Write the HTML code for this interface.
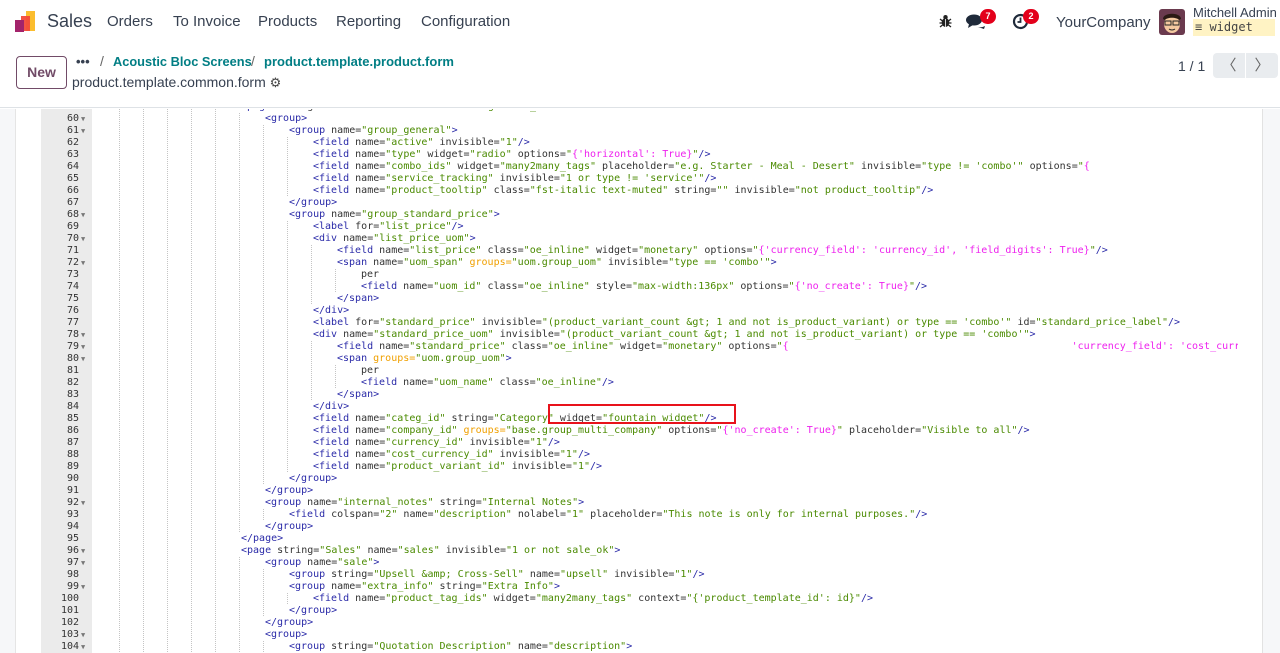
<!DOCTYPE html>
<html><head><meta charset="utf-8"><style>
*{box-sizing:border-box;margin:0;padding:0}
body{width:1280px;height:653px;overflow:hidden;background:#fff;font-family:"Liberation Sans",sans-serif;color:#212529;position:relative}
.nav{position:absolute;left:0;top:0;width:1280px;height:44px;background:#fff}
.nav .m{position:absolute;top:13px;font-size:15px;color:#374151}
.cp{position:absolute;left:0;top:44px;width:1280px;height:64px;border-bottom:1px solid #dee2e6;background:#fff}
.badge{position:absolute;background:#e3001b;color:#fff;font-size:9px;font-weight:bold;border-radius:8px;width:16px;height:15px;text-align:center;line-height:15px}
.ed{position:absolute;left:0;top:109px;width:1280px;height:544px;overflow:hidden}
.lp{position:absolute;left:0;top:0;width:16px;height:544px;background:#f6f7f9;border-right:1px solid #e5e5e5}
.gut{position:absolute;left:41px;top:0;width:51px;height:544px;background:#ebebeb}
.sb{position:absolute;left:1262px;top:0;width:18px;height:544px;background:#f6f7f9;border-left:1px solid #e2e2e2}
.code{position:absolute;left:0;top:-8px;width:1238px;overflow:hidden;font-family:"DejaVu Sans Mono",monospace;font-size:10px;line-height:12px}
.ln{height:12px;position:relative}
.ln .n{position:absolute;left:41px;width:38px;text-align:right;color:#333;top:0}
.ln .f{position:absolute;left:81px;color:#777;font-size:7px;top:0}
.ln .c{position:absolute;left:97px;top:0;height:12px;white-space:pre;line-height:12px}
i,b{display:inline-block;width:24px;height:12px;vertical-align:top}
i{background:repeating-linear-gradient(to bottom,#c4c4c4 0 1px,transparent 1px 2px) no-repeat 22px 0/1px 100%}
.t{color:#2a2aa8}.a{color:#333}.s{color:#4a8a00}.m2{color:#ee22ee}.o{color:#f0a000}
</style></head><body>
<div class="nav">
<svg style="position:absolute;left:15px;top:11px" width="23" height="22" viewBox="0 0 23 22"><rect x="11" y="0" width="9" height="20" fill="#fbbd2e"/><rect x="6" y="5" width="9" height="15" fill="#f34a3a" opacity=".95"/><rect x="0" y="9" width="9" height="12" fill="#a3236b"/></svg>
<div style="position:absolute;left:47px;top:11px;font-size:18px;color:#374151">Sales</div>
<div class="m" style="left:107px">Orders</div>
<div class="m" style="left:173px">To Invoice</div>
<div class="m" style="left:258px">Products</div>
<div class="m" style="left:336px">Reporting</div>
<div class="m" style="left:421px">Configuration</div>
<svg style="position:absolute;left:939px;top:14px" width="13" height="14" viewBox="0 0 13 14"><ellipse cx="6.5" cy="8.5" rx="3.8" ry="4.5" fill="#222"/><circle cx="6.5" cy="3.2" r="2.2" fill="#222"/><path d="M1 5l2.5 2M12 5l-2.5 2M0.5 9h3M12.5 9h-3M1 13l2.5-2M12 13l-2.5-2" stroke="#222" stroke-width="1.3"/><line x1="6.5" y1="5" x2="6.5" y2="13" stroke="#fff" stroke-width=".8"/></svg>
<svg style="position:absolute;left:966px;top:13px" width="20" height="17" viewBox="0 0 20 17"><ellipse cx="8" cy="7" rx="8" ry="5.5" fill="#1f2a3a"/><path d="M3 11l-1 4 5-3z" fill="#1f2a3a"/><path d="M10 14c4 1 7 0 9-1l-1 3-3-1z" fill="#1f2a3a"/></svg>
<div class="badge" style="left:980px;top:9px">7</div>
<svg style="position:absolute;left:1012px;top:13px" width="17" height="17" viewBox="0 0 17 17"><circle cx="8.5" cy="8.5" r="6.5" fill="none" stroke="#1f2a3a" stroke-width="2.2"/><path d="M8.5 4.5v4.5h-3" stroke="#1f2a3a" stroke-width="1.8" fill="none"/></svg>
<div class="badge" style="left:1023px;top:9px">2</div>
<div style="position:absolute;left:1056px;top:14px;font-size:15px;color:#374151">YourCompany</div>
<div style="position:absolute;left:1159px;top:9px;width:26px;height:26px;border-radius:3px;background:#6a3a4e;overflow:hidden"><svg width="26" height="26" viewBox="0 0 26 26"><ellipse cx="13" cy="15" rx="8" ry="9" fill="#f4c9a0"/><path d="M4 10c0-7 18-7 18 0l-2 1c-2-3-12-3-14 0z" fill="#2b1a14"/><rect x="6" y="12" width="6" height="4" fill="none" stroke="#222" stroke-width="1"/><rect x="14" y="12" width="6" height="4" fill="none" stroke="#222" stroke-width="1"/><path d="M10 20q3 2 6 0" stroke="#222" fill="none"/></svg></div>
<div style="position:absolute;left:1193px;top:5px;font-size:13px;color:#374151">Mitchell Admin</div>
<div style="position:absolute;left:1193px;top:19px;width:82px;height:17px;background:#fff3c4;font-family:'DejaVu Sans Mono',monospace;font-size:12px;color:#444;line-height:17px;padding-left:2px">≡ widget</div>
</div>
<div class="cp">
<div style="position:absolute;left:16px;top:12px;width:51px;height:33px;border:1px solid #714b67;border-radius:4px;color:#714b67;font-size:14px;font-weight:bold;text-align:center;line-height:31px">New</div>
<div style="position:absolute;left:76px;top:10px;font-size:13px;color:#374151;font-weight:bold">•••</div>
<div style="position:absolute;left:100px;top:9px;font-size:14px;color:#666">/</div>
<div style="position:absolute;left:113px;top:10px;font-size:12.8px;color:#017e84;font-weight:bold">Acoustic Bloc Screens</div>
<div style="position:absolute;left:251px;top:9px;font-size:14px;color:#666">/</div>
<div style="position:absolute;left:264px;top:10px;font-size:13px;color:#017e84;font-weight:bold">product.template.product.form</div>
<div style="position:absolute;left:72px;top:30px;font-size:14px;color:#374151">product.template.common.form <span style="font-size:13px;color:#444">⚙</span></div>
<div style="position:absolute;left:1178px;top:14px;font-size:14px;color:#374151">1 / 1</div>
<div style="position:absolute;left:1213px;top:9px;width:32px;height:25px;background:#e9ecef;border-radius:4px 0 0 4px;text-align:center;line-height:25px;color:#666;font-size:15px">〈</div>
<div style="position:absolute;left:1246px;top:9px;width:32px;height:25px;background:#e9ecef;border-radius:0 4px 4px 0;text-align:center;line-height:25px;color:#666;font-size:15px">〉</div>
</div>
<div class="ed">
<div class="lp"></div><div class="gut"></div><div class="sb"></div>
<div class="code">
<div class="ln"><span class="n">59</span><span class="f">▼</span><span class="c"><i></i><i></i><i></i><i></i><i></i><b></b><span class="t">&lt;page</span> <span class="a">string=</span><span class="s">"General Information"</span> <span class="a">name=</span><span class="s">"general_information"</span><span class="t">&gt;</span></span></div>
<div class="ln"><span class="n">60</span><span class="f">▼</span><span class="c"><i></i><i></i><i></i><i></i><i></i><i></i><b></b><span class="t">&lt;group&gt;</span></span></div>
<div class="ln"><span class="n">61</span><span class="f">▼</span><span class="c"><i></i><i></i><i></i><i></i><i></i><i></i><i></i><b></b><span class="t">&lt;group</span> <span class="a">name=</span><span class="s">"group_general"</span><span class="t">&gt;</span></span></div>
<div class="ln"><span class="n">62</span><span class="c"><i></i><i></i><i></i><i></i><i></i><i></i><i></i><i></i><b></b><span class="t">&lt;field</span> <span class="a">name=</span><span class="s">"active"</span> <span class="a">invisible=</span><span class="s">"1"</span><span class="t">/&gt;</span></span></div>
<div class="ln"><span class="n">63</span><span class="c"><i></i><i></i><i></i><i></i><i></i><i></i><i></i><i></i><b></b><span class="t">&lt;field</span> <span class="a">name=</span><span class="s">"type"</span> <span class="a">widget=</span><span class="s">"radio"</span> <span class="a">options=</span><span class="s">"</span><span class="m2">{'horizontal': True}</span><span class="s">"</span><span class="t">/&gt;</span></span></div>
<div class="ln"><span class="n">64</span><span class="c"><i></i><i></i><i></i><i></i><i></i><i></i><i></i><i></i><b></b><span class="t">&lt;field</span> <span class="a">name=</span><span class="s">"combo_ids"</span> <span class="a">widget=</span><span class="s">"many2many_tags"</span> <span class="a">placeholder=</span><span class="s">"e.g. Starter - Meal - Desert"</span> <span class="a">invisible=</span><span class="s">"type != 'combo'"</span> <span class="a">options=</span><span class="s">"</span><span class="m2">{</span></span></div>
<div class="ln"><span class="n">65</span><span class="c"><i></i><i></i><i></i><i></i><i></i><i></i><i></i><i></i><b></b><span class="t">&lt;field</span> <span class="a">name=</span><span class="s">"service_tracking"</span> <span class="a">invisible=</span><span class="s">"1 or type != 'service'"</span><span class="t">/&gt;</span></span></div>
<div class="ln"><span class="n">66</span><span class="c"><i></i><i></i><i></i><i></i><i></i><i></i><i></i><i></i><b></b><span class="t">&lt;field</span> <span class="a">name=</span><span class="s">"product_tooltip"</span> <span class="a">class=</span><span class="s">"fst-italic text-muted"</span> <span class="a">string=</span><span class="s">""</span> <span class="a">invisible=</span><span class="s">"not product_tooltip"</span><span class="t">/&gt;</span></span></div>
<div class="ln"><span class="n">67</span><span class="c"><i></i><i></i><i></i><i></i><i></i><i></i><i></i><b></b><span class="t">&lt;/group&gt;</span></span></div>
<div class="ln"><span class="n">68</span><span class="f">▼</span><span class="c"><i></i><i></i><i></i><i></i><i></i><i></i><i></i><b></b><span class="t">&lt;group</span> <span class="a">name=</span><span class="s">"group_standard_price"</span><span class="t">&gt;</span></span></div>
<div class="ln"><span class="n">69</span><span class="c"><i></i><i></i><i></i><i></i><i></i><i></i><i></i><i></i><b></b><span class="t">&lt;label</span> <span class="a">for=</span><span class="s">"list_price"</span><span class="t">/&gt;</span></span></div>
<div class="ln"><span class="n">70</span><span class="f">▼</span><span class="c"><i></i><i></i><i></i><i></i><i></i><i></i><i></i><i></i><b></b><span class="t">&lt;div</span> <span class="a">name=</span><span class="s">"list_price_uom"</span><span class="t">&gt;</span></span></div>
<div class="ln"><span class="n">71</span><span class="c"><i></i><i></i><i></i><i></i><i></i><i></i><i></i><i></i><i></i><b></b><span class="t">&lt;field</span> <span class="a">name=</span><span class="s">"list_price"</span> <span class="a">class=</span><span class="s">"oe_inline"</span> <span class="a">widget=</span><span class="s">"monetary"</span> <span class="a">options=</span><span class="s">"</span><span class="m2">{'currency_field': 'currency_id', 'field_digits': True}</span><span class="s">"</span><span class="t">/&gt;</span></span></div>
<div class="ln"><span class="n">72</span><span class="f">▼</span><span class="c"><i></i><i></i><i></i><i></i><i></i><i></i><i></i><i></i><i></i><b></b><span class="t">&lt;span</span> <span class="a">name=</span><span class="s">"uom_span"</span> <span class="o">groups=</span><span class="s">"uom.group_uom"</span> <span class="a">invisible=</span><span class="s">"type == 'combo'"</span><span class="t">&gt;</span></span></div>
<div class="ln"><span class="n">73</span><span class="c"><i></i><i></i><i></i><i></i><i></i><i></i><i></i><i></i><i></i><i></i><b></b><span class="a">per</span></span></div>
<div class="ln"><span class="n">74</span><span class="c"><i></i><i></i><i></i><i></i><i></i><i></i><i></i><i></i><i></i><i></i><b></b><span class="t">&lt;field</span> <span class="a">name=</span><span class="s">"uom_id"</span> <span class="a">class=</span><span class="s">"oe_inline"</span> <span class="a">style=</span><span class="s">"max-width:136px"</span> <span class="a">options=</span><span class="s">"</span><span class="m2">{'no_create': True}</span><span class="s">"</span><span class="t">/&gt;</span></span></div>
<div class="ln"><span class="n">75</span><span class="c"><i></i><i></i><i></i><i></i><i></i><i></i><i></i><i></i><i></i><b></b><span class="t">&lt;/span&gt;</span></span></div>
<div class="ln"><span class="n">76</span><span class="c"><i></i><i></i><i></i><i></i><i></i><i></i><i></i><i></i><b></b><span class="t">&lt;/div&gt;</span></span></div>
<div class="ln"><span class="n">77</span><span class="c"><i></i><i></i><i></i><i></i><i></i><i></i><i></i><i></i><b></b><span class="t">&lt;label</span> <span class="a">for=</span><span class="s">"standard_price"</span> <span class="a">invisible=</span><span class="s">"(product_variant_count &amp;gt; 1 and not is_product_variant) or type == 'combo'"</span> <span class="a">id=</span><span class="s">"standard_price_label"</span><span class="t">/&gt;</span></span></div>
<div class="ln"><span class="n">78</span><span class="f">▼</span><span class="c"><i></i><i></i><i></i><i></i><i></i><i></i><i></i><i></i><b></b><span class="t">&lt;div</span> <span class="a">name=</span><span class="s">"standard_price_uom"</span> <span class="a">invisible=</span><span class="s">"(product_variant_count &amp;gt; 1 and not is_product_variant) or type == 'combo'"</span><span class="t">&gt;</span></span></div>
<div class="ln"><span class="n">79</span><span class="f">▼</span><span class="c"><i></i><i></i><i></i><i></i><i></i><i></i><i></i><i></i><i></i><b></b><span class="t">&lt;field</span> <span class="a">name=</span><span class="s">"standard_price"</span> <span class="a">class=</span><span class="s">"oe_inline"</span> <span class="a">widget=</span><span class="s">"monetary"</span> <span class="a">options=</span><span class="s">"</span><span class="m2">{                                               'currency_field': 'cost_currency_id'}</span></span></div>
<div class="ln"><span class="n">80</span><span class="f">▼</span><span class="c"><i></i><i></i><i></i><i></i><i></i><i></i><i></i><i></i><i></i><b></b><span class="t">&lt;span</span> <span class="o">groups=</span><span class="s">"uom.group_uom"</span><span class="t">&gt;</span></span></div>
<div class="ln"><span class="n">81</span><span class="c"><i></i><i></i><i></i><i></i><i></i><i></i><i></i><i></i><i></i><i></i><b></b><span class="a">per</span></span></div>
<div class="ln"><span class="n">82</span><span class="c"><i></i><i></i><i></i><i></i><i></i><i></i><i></i><i></i><i></i><i></i><b></b><span class="t">&lt;field</span> <span class="a">name=</span><span class="s">"uom_name"</span> <span class="a">class=</span><span class="s">"oe_inline"</span><span class="t">/&gt;</span></span></div>
<div class="ln"><span class="n">83</span><span class="c"><i></i><i></i><i></i><i></i><i></i><i></i><i></i><i></i><i></i><b></b><span class="t">&lt;/span&gt;</span></span></div>
<div class="ln"><span class="n">84</span><span class="c"><i></i><i></i><i></i><i></i><i></i><i></i><i></i><i></i><b></b><span class="t">&lt;/div&gt;</span></span></div>
<div class="ln"><span class="n">85</span><span class="c"><i></i><i></i><i></i><i></i><i></i><i></i><i></i><i></i><b></b><span class="t">&lt;field</span> <span class="a">name=</span><span class="s">"categ_id"</span> <span class="a">string=</span><span class="s">"Category"</span> <span class="a">widget=</span><span class="s">"fountain_widget"</span><span class="t">/&gt;</span></span></div>
<div class="ln"><span class="n">86</span><span class="c"><i></i><i></i><i></i><i></i><i></i><i></i><i></i><i></i><b></b><span class="t">&lt;field</span> <span class="a">name=</span><span class="s">"company_id"</span> <span class="o">groups=</span><span class="s">"base.group_multi_company"</span> <span class="a">options=</span><span class="s">"</span><span class="m2">{'no_create': True}</span><span class="s">"</span> <span class="a">placeholder=</span><span class="s">"Visible to all"</span><span class="t">/&gt;</span></span></div>
<div class="ln"><span class="n">87</span><span class="c"><i></i><i></i><i></i><i></i><i></i><i></i><i></i><i></i><b></b><span class="t">&lt;field</span> <span class="a">name=</span><span class="s">"currency_id"</span> <span class="a">invisible=</span><span class="s">"1"</span><span class="t">/&gt;</span></span></div>
<div class="ln"><span class="n">88</span><span class="c"><i></i><i></i><i></i><i></i><i></i><i></i><i></i><i></i><b></b><span class="t">&lt;field</span> <span class="a">name=</span><span class="s">"cost_currency_id"</span> <span class="a">invisible=</span><span class="s">"1"</span><span class="t">/&gt;</span></span></div>
<div class="ln"><span class="n">89</span><span class="c"><i></i><i></i><i></i><i></i><i></i><i></i><i></i><i></i><b></b><span class="t">&lt;field</span> <span class="a">name=</span><span class="s">"product_variant_id"</span> <span class="a">invisible=</span><span class="s">"1"</span><span class="t">/&gt;</span></span></div>
<div class="ln"><span class="n">90</span><span class="c"><i></i><i></i><i></i><i></i><i></i><i></i><i></i><b></b><span class="t">&lt;/group&gt;</span></span></div>
<div class="ln"><span class="n">91</span><span class="c"><i></i><i></i><i></i><i></i><i></i><i></i><b></b><span class="t">&lt;/group&gt;</span></span></div>
<div class="ln"><span class="n">92</span><span class="f">▼</span><span class="c"><i></i><i></i><i></i><i></i><i></i><i></i><b></b><span class="t">&lt;group</span> <span class="a">name=</span><span class="s">"internal_notes"</span> <span class="a">string=</span><span class="s">"Internal Notes"</span><span class="t">&gt;</span></span></div>
<div class="ln"><span class="n">93</span><span class="c"><i></i><i></i><i></i><i></i><i></i><i></i><i></i><b></b><span class="t">&lt;field</span> <span class="a">colspan=</span><span class="s">"2"</span> <span class="a">name=</span><span class="s">"description"</span> <span class="a">nolabel=</span><span class="s">"1"</span> <span class="a">placeholder=</span><span class="s">"This note is only for internal purposes."</span><span class="t">/&gt;</span></span></div>
<div class="ln"><span class="n">94</span><span class="c"><i></i><i></i><i></i><i></i><i></i><i></i><b></b><span class="t">&lt;/group&gt;</span></span></div>
<div class="ln"><span class="n">95</span><span class="c"><i></i><i></i><i></i><i></i><i></i><b></b><span class="t">&lt;/page&gt;</span></span></div>
<div class="ln"><span class="n">96</span><span class="f">▼</span><span class="c"><i></i><i></i><i></i><i></i><i></i><b></b><span class="t">&lt;page</span> <span class="a">string=</span><span class="s">"Sales"</span> <span class="a">name=</span><span class="s">"sales"</span> <span class="a">invisible=</span><span class="s">"1 or not sale_ok"</span><span class="t">&gt;</span></span></div>
<div class="ln"><span class="n">97</span><span class="f">▼</span><span class="c"><i></i><i></i><i></i><i></i><i></i><i></i><b></b><span class="t">&lt;group</span> <span class="a">name=</span><span class="s">"sale"</span><span class="t">&gt;</span></span></div>
<div class="ln"><span class="n">98</span><span class="c"><i></i><i></i><i></i><i></i><i></i><i></i><i></i><b></b><span class="t">&lt;group</span> <span class="a">string=</span><span class="s">"Upsell &amp;amp; Cross-Sell"</span> <span class="a">name=</span><span class="s">"upsell"</span> <span class="a">invisible=</span><span class="s">"1"</span><span class="t">/&gt;</span></span></div>
<div class="ln"><span class="n">99</span><span class="f">▼</span><span class="c"><i></i><i></i><i></i><i></i><i></i><i></i><i></i><b></b><span class="t">&lt;group</span> <span class="a">name=</span><span class="s">"extra_info"</span> <span class="a">string=</span><span class="s">"Extra Info"</span><span class="t">&gt;</span></span></div>
<div class="ln"><span class="n">100</span><span class="c"><i></i><i></i><i></i><i></i><i></i><i></i><i></i><i></i><b></b><span class="t">&lt;field</span> <span class="a">name=</span><span class="s">"product_tag_ids"</span> <span class="a">widget=</span><span class="s">"many2many_tags"</span> <span class="a">context=</span><span class="s">"{'product_template_id': id}"</span><span class="t">/&gt;</span></span></div>
<div class="ln"><span class="n">101</span><span class="c"><i></i><i></i><i></i><i></i><i></i><i></i><i></i><b></b><span class="t">&lt;/group&gt;</span></span></div>
<div class="ln"><span class="n">102</span><span class="c"><i></i><i></i><i></i><i></i><i></i><i></i><b></b><span class="t">&lt;/group&gt;</span></span></div>
<div class="ln"><span class="n">103</span><span class="f">▼</span><span class="c"><i></i><i></i><i></i><i></i><i></i><i></i><b></b><span class="t">&lt;group&gt;</span></span></div>
<div class="ln"><span class="n">104</span><span class="f">▼</span><span class="c"><i></i><i></i><i></i><i></i><i></i><i></i><i></i><b></b><span class="t">&lt;group</span> <span class="a">string=</span><span class="s">"Quotation Description"</span> <span class="a">name=</span><span class="s">"description"</span><span class="t">&gt;</span></span></div>
<div class="ln"><span class="n">105</span><span class="c"><i></i><i></i><i></i><i></i><i></i><i></i><i></i><i></i><b></b><span class="t">&lt;field</span> <span class="a">name=</span><span class="s">"description_sale"</span> <span class="a">nolabel=</span><span class="s">"1"</span></span></div>
</div>
<div style="position:absolute;left:548px;top:295px;width:188px;height:20px;border:2px solid #e8121b"></div>
</div>
</body></html>
